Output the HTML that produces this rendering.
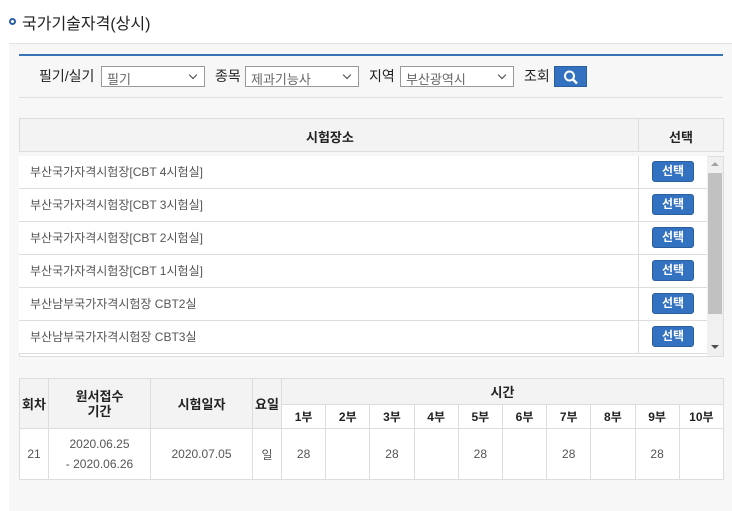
<!DOCTYPE html><html><head><meta charset="utf-8"><style>
*{margin:0;padding:0;box-sizing:border-box}
body{width:732px;height:511px;background:#fff;font-family:"Liberation Sans","Noto Sans CJK KR",sans-serif;position:relative;overflow:hidden;color:#222}
.a{position:absolute}
.sel{position:absolute;height:21px;border:1px solid #999;background:#fff;font-size:13px;color:#666;padding:2px 5px;}
.sel:after{content:"";position:absolute;right:8px;top:5px;width:5px;height:5px;border-right:1.5px solid #444;border-bottom:1.5px solid #444;transform:rotate(45deg)}
.lbl{position:absolute;font-size:14px;color:#222;top:66px}
table{border-collapse:collapse;position:absolute;table-layout:fixed}
td{border:1px solid #ddd;text-align:center;font-size:12px}
.btn{display:inline-block;width:42px;height:21px;background:#3372c0;border:1px solid #2a5f9e;border-radius:3px;color:#fff;font-size:12px;font-weight:bold;line-height:19px}
.row{position:absolute;left:19px;width:688px;height:33px;border-bottom:1px solid #ddd;background:#fff;font-size:12px;color:#555}
.row span{position:absolute;left:11px;top:7px}
.row .b{position:absolute;left:619px;width:1px;top:0;bottom:0;background:#ddd}
.row .btn{position:absolute;left:633px;top:5px}
</style></head><body>
<div class="a" style="left:9px;top:18px;width:7px;height:7px;border:2px solid #2a5fa8;border-radius:50%"></div>
<div class="a" style="left:22px;top:10px;font-size:16px;color:#222">국가기술자격(상시)</div>
<div class="a" style="left:9px;top:43px;width:723px;height:468px;background:#f7f7f7;border-top:1px solid #e3e3e3"></div>
<div class="a" style="left:19px;top:54px;width:704px;height:2px;background:#3a74b8"></div>
<div class="lbl" style="left:39px">필기/실기</div>
<div class="sel" style="left:101px;top:66px;width:104px">필기</div>
<div class="lbl" style="left:215px">종목</div>
<div class="sel" style="left:245px;top:66px;width:114px">제과기능사</div>
<div class="lbl" style="left:369px">지역</div>
<div class="sel" style="left:400px;top:66px;width:114px">부산광역시</div>
<div class="lbl" style="left:524px">조회</div>
<div class="a" style="left:554px;top:66px;width:33px;height:21px;background:#3372c0;border:1px solid #2a5f9e">
<svg width="33" height="21" viewBox="0 0 33 21"><circle cx="14.5" cy="9" r="4.5" fill="none" stroke="#fff" stroke-width="2"/><path d="M18 12.5l4 4" stroke="#fff" stroke-width="2.5"/></svg></div>
<div class="a" style="left:19px;top:97px;width:704px;height:1px;background:#e0e0e0"></div>
<div class="a" style="left:19px;top:118px;width:705px;height:34px;background:#f3f3f3;border:1px solid #ddd;font-size:13px;font-weight:bold">
<span class="a" style="left:286px;top:8px">시험장소</span>
<div class="a" style="left:618px;top:0;width:1px;height:32px;background:#ddd"></div>
<span class="a" style="left:649px;top:8px">선택</span></div>
<div class="a" style="left:19px;top:156px;width:705px;height:201px;background:#fff;border:1px solid #ddd;overflow:hidden"></div>
<div class="row" style="top:156px"><span>부산국가자격시험장[CBT 4시험실]</span><i class="b"></i><b class="btn" style="text-align:center">선택</b></div>
<div class="row" style="top:189px"><span>부산국가자격시험장[CBT 3시험실]</span><i class="b"></i><b class="btn" style="text-align:center">선택</b></div>
<div class="row" style="top:222px"><span>부산국가자격시험장[CBT 2시험실]</span><i class="b"></i><b class="btn" style="text-align:center">선택</b></div>
<div class="row" style="top:255px"><span>부산국가자격시험장[CBT 1시험실]</span><i class="b"></i><b class="btn" style="text-align:center">선택</b></div>
<div class="row" style="top:288px"><span>부산남부국가자격시험장 CBT2실</span><i class="b"></i><b class="btn" style="text-align:center">선택</b></div>
<div class="row" style="top:321px"><span>부산남부국가자격시험장 CBT3실</span><i class="b"></i><b class="btn" style="text-align:center">선택</b></div>
<div class="a" style="left:707px;top:157px;width:16px;height:199px;background:#f0f0f0"></div>
<div class="a" style="left:708px;top:173px;width:14px;height:141px;background:#c1c1c1"></div>
<div class="a" style="left:711px;top:162px;border:4px solid transparent;border-bottom:4px solid #a3a3a3;border-top:0"></div>
<div class="a" style="left:711px;top:345px;border:4px solid transparent;border-top:4px solid #505050;border-bottom:0"></div>
<table style="left:19px;top:378px;width:705px;background:#fff">
<colgroup><col style="width:29px"><col style="width:102px"><col style="width:102px"><col style="width:29px"><col span="10" style="width:44.2px"></colgroup>
<tr style="height:26px;background:#f3f3f3;font-weight:bold"><td rowspan="2" style="font-size:13px">회차</td><td rowspan="2" style="font-size:13px;line-height:15px">원서접수<br>기간</td><td rowspan="2" style="font-size:13px">시험일자</td><td rowspan="2" style="font-size:13px">요일</td><td colspan="10" style="font-size:13px">시간</td></tr>
<tr style="height:24px;background:#fff;font-weight:bold;font-size:11px"><td>1부</td><td>2부</td><td>3부</td><td>4부</td><td>5부</td><td>6부</td><td>7부</td><td>8부</td><td>9부</td><td>10부</td></tr>
<tr style="height:51px;color:#555"><td>21</td><td style="line-height:20px">2020.06.25<br>- 2020.06.26</td><td>2020.07.05</td><td>일</td><td>28</td><td></td><td>28</td><td></td><td>28</td><td></td><td>28</td><td></td><td>28</td><td></td></tr>
</table>
</body></html>
